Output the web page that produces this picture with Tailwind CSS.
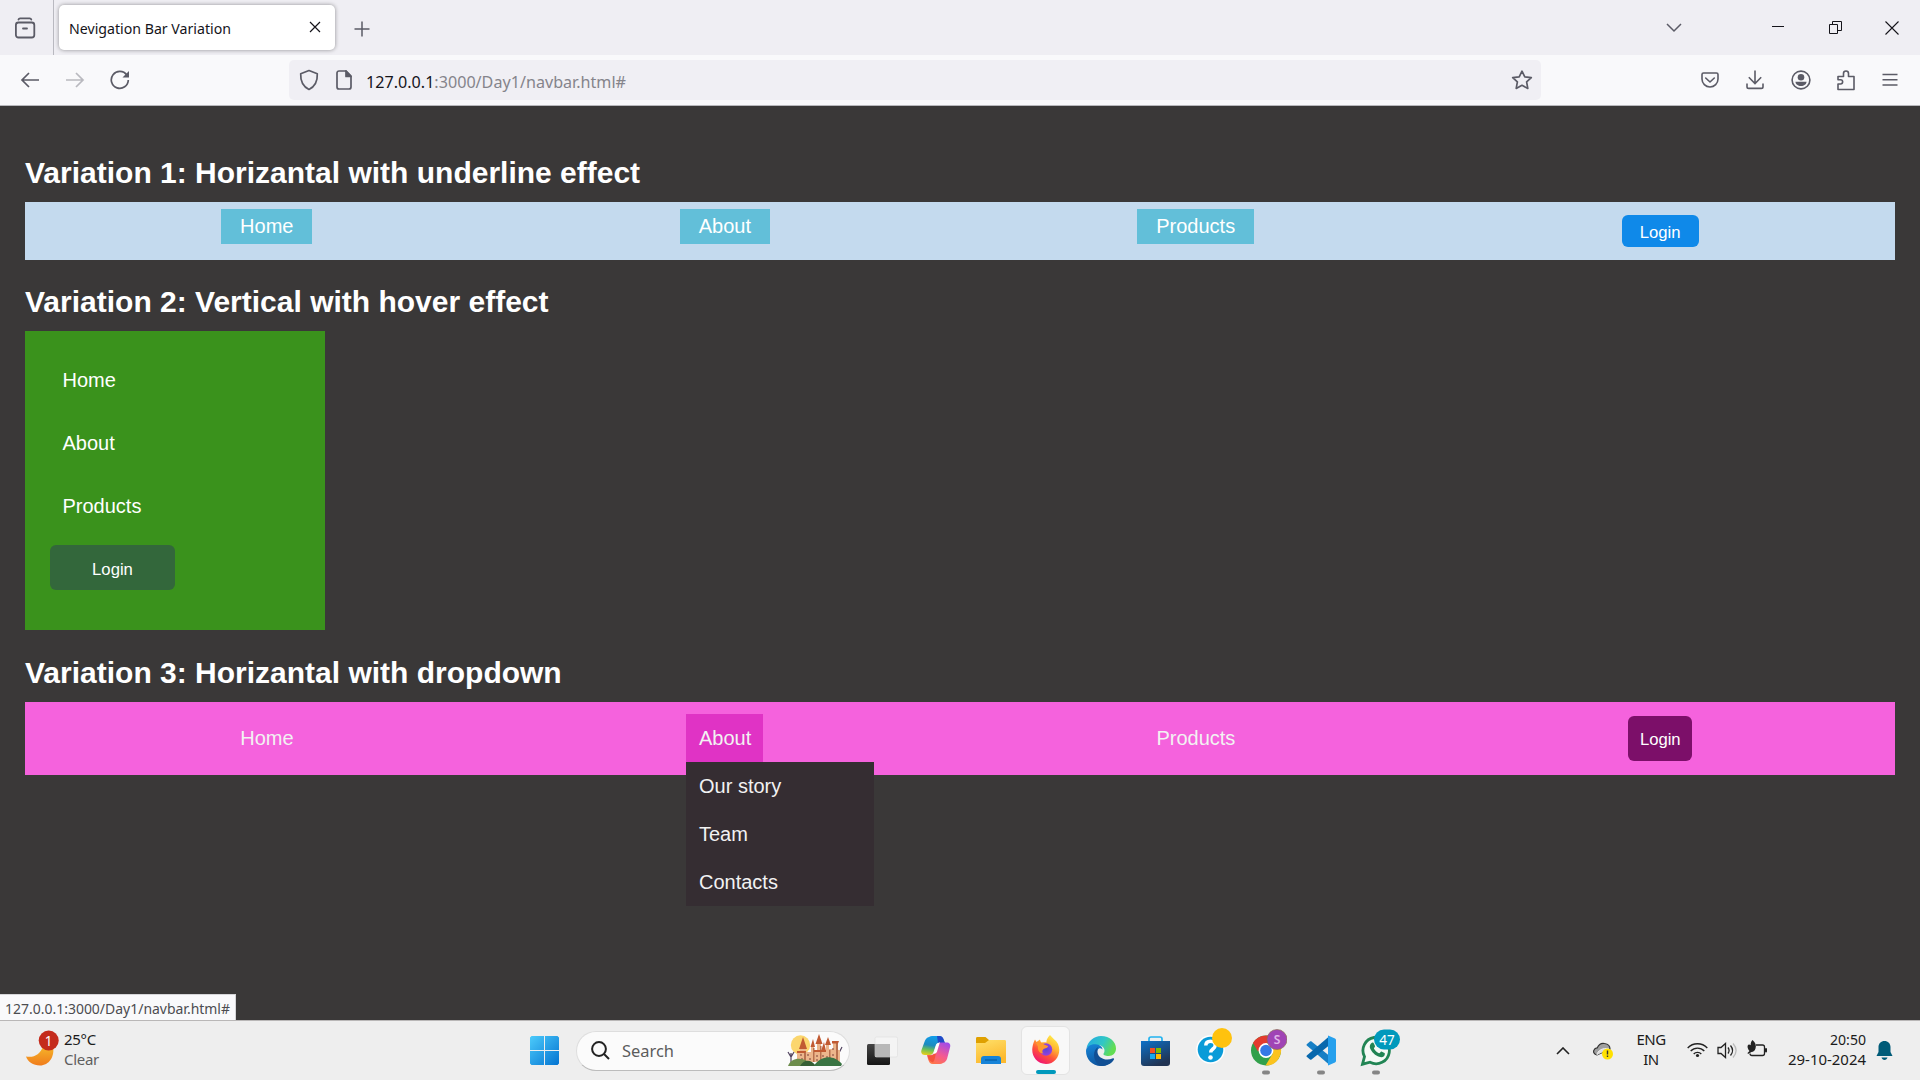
<!DOCTYPE html>
<html lang="en">
<head>
<meta charset="utf-8">
<title>Nevigation Bar Variation</title>
<script src="https://cdn.jsdelivr.net/npm/@tailwindcss/browser@4"></script>
</head>
<body class="w-[1920px] h-[1080px] overflow-hidden flex flex-col bg-[#3a3838] font-['Noto_Sans',sans-serif]">

<!-- Tab strip -->
<header class="h-[55px] shrink-0 bg-[#efeef3] flex items-center text-[#5b5b66]">
  <div class="w-[54px] h-full border-r border-[#b9b9c0] flex items-center pl-[14px]">
    <svg class="w-[22px] h-[22px]" viewBox="0 0 22 22" fill="none" stroke="currentColor" stroke-width="1.8" stroke-linecap="round"><path d="M4.5 2.6c.3-1 .8-1.3 1.6-1.3h9.600c.8 0 1.300.3 1.600 1.300"/><rect x="1.900" y="5.500" width="18.400" height="15" rx="2.500"/><path d="M9 11.500h4"/></svg>
  </div>
  <div class="ml-[5px] w-[276px] h-[45px] rounded-[5px] bg-white shadow-[0_0_4px_rgba(0,0,0,0.4)] flex items-center justify-between pl-[10px] pr-[14px] text-[#15141a]">
    <svg class="w-[180px] h-[30px] overflow-visible" viewBox="0 0 180 30"><text x="0" y="20.500" font-size="15" textLength="162" lengthAdjust="spacingAndGlyphs" fill="#15141a">Nevigation Bar Variation</text></svg>
    <svg class="w-[12px] h-[12px] -mt-[1px]" viewBox="0 0 12 12" stroke="currentColor" stroke-width="1.200"><path d="M1 1l10 10M11 1L1 11"/></svg>
  </div>
  <svg class="ml-[19px] mt-[3px] w-[16px] h-[16px]" viewBox="0 0 16 16" stroke="currentColor" stroke-width="1.500"><path d="M8 .5v15M.5 8h15"/></svg>
  <div class="flex-1"></div>
  <svg class="w-[16px] h-[10px] mr-[90px]" viewBox="0 0 16 10" fill="none" stroke="currentColor" stroke-width="1.500"><path d="M1 1l7 7 7-7"/></svg>
  <svg class="w-[12px] h-[12px] mr-[45px]" viewBox="0 0 12 12" stroke="#15141a" stroke-width="1"><path d="M0 4.500h12"/></svg>
  <svg class="w-[13px] h-[13px] mr-[43px]" viewBox="0 0 13 13" fill="none" stroke="#15141a" stroke-width="1"><path d="M.5 3.500h8v9h-8zM3.500 3.500v-3h9v9h-4"/></svg>
  <svg class="w-[14px] h-[14px] mr-[21px]" viewBox="0 0 14 14" stroke="#15141a" stroke-width="1.100"><path d="M.5.5l13 13M13.500.5l-13 13"/></svg>
</header>

<!-- Address toolbar -->
<div class="h-[51px] shrink-0 bg-[#f9f9fb] border-b border-[#b8b8bc] flex items-center text-[#5b5b66]">
  <svg class="ml-[20px] w-[20px] h-[16px]" viewBox="0 0 20 16" fill="none" stroke="currentColor" stroke-width="1.700"><path d="M19 8H2M9 1L2 8l7 7"/></svg>
  <svg class="ml-[25px] w-[20px] h-[16px] opacity-40" viewBox="0 0 20 16" fill="none" stroke="currentColor" stroke-width="1.700"><path d="M1 8h17M11 1l7 7-7 7"/></svg>
  <svg class="ml-[25px] w-[20px] h-[20px]" viewBox="0 0 20 20" fill="none" stroke="currentColor" stroke-width="1.700"><path d="M16.800 5A8.500 8.500 0 1 0 18.300 10"/><path d="M19 1v6.500h-6.500z" fill="currentColor" stroke="none"/></svg>
  <div class="ml-[159px] w-[1252px] h-[40px] rounded-[5px] bg-[#f0eff4] flex items-center pl-[10px] pr-[8px]">
    <svg class="w-[20px] h-[22px]" viewBox="0 0 20 22" fill="none" stroke="currentColor" stroke-width="1.700" stroke-linejoin="round"><path d="M10 1.500l8.300 3.300c.3 6.500-1.800 12.500-8.300 15.700C3.500 17.300 1.400 11.300 1.700 4.800z"/></svg>
    <svg class="ml-[17px] w-[16px] h-[20px]" viewBox="0 0 16 20" fill="none" stroke="currentColor" stroke-width="1.700" stroke-linejoin="round"><path d="M3 1h7l5 5v11a2 2 0 0 1-2 2H3a2 2 0 0 1-2-2V3a2 2 0 0 1 2-2z"/><path d="M10 1v5.500h5z" fill="currentColor"/></svg>
    <svg class="ml-[14px] w-[290px] h-[34px] overflow-visible" viewBox="0 0 290 34"><text x="0" y="25" font-size="17" textLength="260" lengthAdjust="spacingAndGlyphs" fill="#85848b"><tspan fill="#15141a">127.0.0.1</tspan>:3000/Day1/navbar.html#</text></svg>
    <div class="flex-1"></div>
    <svg class="w-[22px] h-[20px]" viewBox="0 0 22 20" fill="none" stroke="currentColor" stroke-width="1.700" stroke-linejoin="round"><path d="M11 1.200l2.800 5.600 6.500.8-4.700 4.300 1.200 6.500L11 15.300l-5.800 3.100 1.200-6.500L1.700 7.600l6.500-.8z"/></svg>
  </div>
  <div class="flex-1"></div>
  <svg class="w-[18px] h-[16px] mr-[27px]" viewBox="0 0 18 16" fill="none" stroke="currentColor" stroke-width="1.600" stroke-linecap="round" stroke-linejoin="round"><path d="M2.500 1h13c1 0 1.500.5 1.500 1.500V7a8 8 0 0 1-16 0V2.500C1 1.500 1.500 1 2.500 1zM4.700 6L9 10l4.300-4"/></svg>
  <svg class="w-[18px] h-[20px] mr-[27px]" viewBox="0 0 18 20" fill="none" stroke="currentColor" stroke-width="1.600"><path d="M9 .5V13M2.800 7.300L9 13.500l6.200-6.200M1 13.500v3.200c0 1 .8 1.700 1.700 1.700h12.600c1 0 1.700-.7 1.700-1.700v-3.200"/></svg>
  <svg class="w-[20px] h-[20px] mr-[26px]" viewBox="0 0 20 20"><circle cx="10" cy="10" r="8.900" fill="none" stroke="currentColor" stroke-width="1.600"/><circle cx="10" cy="7.300" r="3.300" fill="currentColor"/><path d="M4.500 11.800h11c0 2.500-2.500 4.200-5.500 4.200s-5.500-1.700-5.500-4.200z" fill="currentColor"/></svg>
  <svg class="w-[18px] h-[21px] mr-[27px]" viewBox="0 0 18 21" fill="none" stroke="currentColor" stroke-width="1.600" stroke-linejoin="round"><path d="M1 6.500h5.500V3.500a2.500 2.500 0 0 1 5 0v3H17v13H1v-5.500h2.500a2 2 0 0 0 0-4.300H1z"/></svg>
  <svg class="w-[16px] h-[14px] mr-[22px]" viewBox="0 0 16 14" stroke="currentColor" stroke-width="1.500"><path d="M.5 1.500h15M.5 6.800h15M.5 12.100h15"/></svg>
</div>

<!-- Page -->
<main class="relative flex-1 px-[25px] pt-[50px] font-['Liberation_Sans',Arial,sans-serif] text-white text-[20px]">
  <h2 class="text-[30px] leading-[34px] font-bold mb-[12px]">Variation 1: Horizantal with underline effect</h2>
  <nav class="h-[58px] bg-[#c4daee] px-[12.5px] flex justify-around items-start">
    <a class="mt-[7px] h-[35px] leading-[34px] px-[18.75px] bg-[#62bfd9]">Home</a>
    <a class="mt-[7px] h-[35px] leading-[34px] px-[18.75px] bg-[#62bfd9]">About</a>
    <a class="mt-[7px] h-[35px] leading-[34px] px-[18.75px] bg-[#62bfd9]">Products</a>
    <button class="mt-[13px] h-[32px] w-[77px] rounded-[6px] bg-[#0f89e9] text-[16.670px] pt-[2px]">Login</button>
  </nav>

  <h2 class="text-[30px] leading-[34px] font-bold mt-[25px] mb-[12px]">Variation 2: Vertical with hover effect</h2>
  <nav class="w-[300px] h-[299px] bg-[#3a921c] px-[25px] pt-[25px] flex flex-col items-start">
    <a class="h-[48px] leading-[48px] px-[12.5px] mb-[15px]">Home</a>
    <a class="h-[48px] leading-[48px] px-[12.5px] mb-[15px]">About</a>
    <a class="h-[48px] leading-[48px] px-[12.5px] mb-[15px]">Products</a>
    <button class="w-[125px] h-[45px] rounded-[6px] bg-[#33673b] text-[16.670px] pt-[3px]">Login</button>
  </nav>

  <h2 class="text-[30px] leading-[34px] font-bold mt-[26px] mb-[12px]">Variation 3: Horizantal with dropdown</h2>
  <nav class="h-[73px] bg-[#f562dd] px-[12.5px] flex justify-around items-start text-[#f2f2f2]">
    <a class="mt-[12px] h-[48px] leading-[48px] px-[12.5px]">Home</a>
    <div class="relative mt-[12px]">
      <a class="block w-[77px] h-[48px] leading-[48px] pl-[12.5px] bg-[#e033c5]">About</a>
      <div class="absolute left-0 top-[48px] w-[188px] h-[144px] bg-[#352d32] flex flex-col leading-[48px] px-[12.5px]">
        <a>Our story</a><a>Team</a><a>Contacts</a>
      </div>
    </div>
    <a class="mt-[12px] h-[48px] leading-[48px] px-[12.5px]">Products</a>
    <button class="mt-[14px] w-[64px] h-[45px] rounded-[6px] bg-[#7c0f69] text-white text-[16.670px] pt-[2px]">Login</button>
  </nav>

  <div class="absolute left-0 bottom-0 w-[236px] h-[26px] bg-[#f9f9fb] border-t border-r border-[#d5d5d8]">
    <svg class="w-[235px] h-[25px] overflow-visible" viewBox="0 0 235 25"><text x="5" y="18.500" font-size="15" textLength="225" lengthAdjust="spacingAndGlyphs" fill="#4c4c50" font-family="Noto Sans, sans-serif">127.0.0.1:3000/Day1/navbar.html#</text></svg>
  </div>
</main>

<!-- Taskbar -->
<footer class="h-[60px] shrink-0 bg-[#eeeeee] border-t border-[#b9b7b7] flex items-center text-[#1b1b1b] text-[15px] leading-[20px]">
  <div class="w-[529px] flex items-center pl-[25px]">
    <svg class="w-[36px] h-[40px] -mt-[8px]" viewBox="0 0 36 40"><defs><linearGradient id="moon" x2="0" y2="1"><stop stop-color="#f5b52a"/><stop offset="1" stop-color="#f07c1c"/></linearGradient></defs><path d="M1 29.500c8 1.500 14-2 17-10h10c2 10-4 19-13 19C8 38.500 3 35 1 29.500z" fill="url(#moon)"/><circle cx="23.700" cy="13.500" r="10" fill="#c42b1c"/><text x="23.700" y="18.500" font-size="13.500" fill="#fff" text-anchor="middle">1</text></svg>
    <div class="ml-[3px] tracking-[-0.300px] -mt-[4px]"><p>25°C</p><p class="text-[#5e5e5e]">Clear</p></div>
  </div>

  <div class="flex items-center">
    <svg class="ml-[1px] w-[29px] h-[29px]" viewBox="0 0 29 29"><defs><linearGradient id="win" x1="0" y1="0" x2="1" y2="1" ><stop stop-color="#4ccbfb"/><stop offset="1" stop-color="#0474d1"/></linearGradient></defs><path fill="url(#win)" d="M1.500 0H14v14H0V1.500zM15 0h12.500L29 1.500V14H15zM0 15h14v14H1.500L0 27.500zM15 15h14v12.500L27.500 29H15z"/></svg>
    <div class="ml-[17px] w-[274px] h-[40px] rounded-full bg-[#fbfbfb] border border-[#dedede] border-b-[#bcbcbc] flex items-center pl-[14px] pr-[6px]">
      <svg class="w-[19px] h-[19px]" viewBox="0 0 19 19" fill="none" stroke="#222" stroke-width="2"><circle cx="8" cy="8" r="6.900"/><path d="M13 13l5 5"/></svg>
      <svg class="ml-[12px] w-[70px] h-[28px] overflow-visible" viewBox="0 0 70 28"><text x="0" y="20" font-size="17" textLength="52" lengthAdjust="spacingAndGlyphs" fill="#5c5c5c">Search</text></svg>
      <div class="flex-1"></div>
      <svg class="w-[56px] h-[33px]" viewBox="0 0 56 33"><circle cx="13.500" cy="11" r="9.700" fill="#fbd66e"/><path d="M4 31V19m-3-1l3 5 3-5M52 29V17m-3-4l3 6 3-6" stroke="#51435f" fill="none" stroke-width="1.200"/><path d="M10 28V18h3v-3h6v3h5v-6h3v5h3V10h4v7h5v-7h3v5h4V8h5v8h2v12z" fill="#ecb68c"/><path d="M17 28V17h2v11zM26 28V14h1.500v14zM33 28V12h1.500v16zM42 28V16h1.500v12zM49 28V9h2v19z" fill="#b8714f"/><path d="M16 3l4 12h-8zM32 0l3.500 10h-7zM26 5l2 8h-4.500zM41 3l3 8h-6zM37 8l2 9h-5zM45 7h7l-1 2.500h-6zM10 17h9l-1 2h-8zM27 16h12v2H27z" fill="#c15a32"/><path d="M14 20v2m7-2v2m-6 2v2m8-2v2m7-5v2m6-2v2m4-1v2m6-10v2m0 4v2m-16 3v2m12-2v2" stroke="#874c42" stroke-width="1.100"/><path d="M1 32c3-8 12-9 19-5 4 2 7 4 9 5z" fill="#6d8d4c"/><path d="M13 32c4-7 11-7 16 0z" fill="#355f35"/><path d="M27 32c5-9 18-13 28-2l-1 2z" fill="#3a7443"/></svg>
    </div>

    <svg class="ml-[17px] w-[31px] h-[29px]" viewBox="0 0 31 29"><defs><linearGradient id="tv" x2="0" y2="1"><stop stop-color="#454545"/><stop offset="1" stop-color="#161616"/></linearGradient></defs><rect y="8" width="23" height="21" rx="1.500" fill="url(#tv)"/><rect x="8" y="1" width="22.500" height="20" rx="1.500" fill="#f4f4f4" stroke="#ddd" stroke-width=".6"/><path d="M8 8h15v13H9.500L8 19.500z" fill="#b8b8b8"/></svg>

    <svg class="ml-[23px] -mt-[1px] w-[30px] h-[28px]" viewBox="0 0 30 28"><defs><linearGradient id="cpa" x1=".3" y1="0" x2=".1" y2="1"><stop stop-color="#129ce8"/><stop offset=".45" stop-color="#1c8bbf"/><stop offset=".7" stop-color="#6dc055"/><stop offset="1" stop-color="#f3cf15"/></linearGradient><linearGradient id="cpb" x1=".8" y1="0" x2=".3" y2="1"><stop stop-color="#a04bea"/><stop offset=".55" stop-color="#f45a92"/><stop offset="1" stop-color="#ff7548"/></linearGradient></defs><path d="M8 1c1-.7 2-1 3-1h7c3 0 4 2 5 5l.7 2H18c-2 0-3 1-3.500 3l-2 6c-.7 2-2 3-4 3H4c-3 0-4.500-2-3.500-5L4 4.500C5 2.500 6 1.500 8 1z" fill="url(#cpa)"/><path d="M16 0h2.500c2.500 0 4 2 4.500 4.500l1 2.500h-7z" fill="#2149c7"/><path d="M22 27c-1 .7-2 1-3 1h-7c-3 0-4-2-5-5l-1-4h4c2 0 3-1 3.500-3l3-8c.6-1 2-1.500 4-1.500h5c3 0 4.500 2 3.500 5L26 23c-1 2-2 3.500-4 4z" fill="url(#cpb)"/><path d="M6.500 19.500H10c2 0 3-1 3.700-3l2-6.500c.5-1.500 1.300-2.500 3-2.800L15 17.500c-1 2.500-.7 6-3 9-2.500-.5-4-2.500-4.700-4.500z" fill="#f4543b"/><path d="M13.500 17l2.500-8c.3-.8.8-1.300 1.800-1.600l-2.500 8.100c-.4 1-.9 1.500-1.800 1.500z" fill="#fff" stroke="#fff" stroke-width="1.500"/></svg>

    <svg class="ml-[25px] w-[30px] h-[27px]" viewBox="0 0 30 27"><defs><linearGradient id="fold" x2=".4" y2="1"><stop stop-color="#ffe06a"/><stop offset="1" stop-color="#fcb92e"/></linearGradient></defs><path d="M0 1.500C0 .5.500 0 1.500 0h8l4 3.500L11 6H0z" fill="#dfa000"/><path d="M0 6h9l4-3h15.500c1 0 1.500.5 1.500 1.500V26H0z" fill="url(#fold)"/><path d="M5 27v-5c0-2 1-3 3-3h14c2 0 3 1 3 3v5z" fill="#1683d8"/><path d="M9 23h12" stroke="#075fa7" stroke-width="1.300"/></svg>

    <div class="relative ml-[15px] w-[49px] h-[49px] rounded-[6px] bg-[#f8f8f8] border border-[#e3e3e3] flex items-center justify-center">
      <svg class="w-[28px] h-[29px] -mt-[2px]" viewBox="0 0 28 29"><defs><linearGradient id="ff" x1=".85" y1=".05" x2=".3" y2="1"><stop stop-color="#fff04c"/><stop offset=".35" stop-color="#ffb531"/><stop offset=".65" stop-color="#ff5438"/><stop offset="1" stop-color="#ef1275"/></linearGradient><radialGradient id="ffc"><stop stop-color="#5a45d7"/><stop offset="1" stop-color="#9541dd"/></radialGradient></defs><path d="M18 0c2 3 6 5 8 9 4 9-2 20-12 20S-1 20 .5 12C1 9 2 6 3 4.500c.5 1 1 1.800 1.500 2.500L8 4.500c.2 1.500.7 2.300 1.500 3 2-.5 4-.5 5 0C14 5 16 2 18 0z" fill="url(#ff)"/><circle cx="14" cy="14.500" r="6.200" fill="url(#ffc)"/><path d="M4 8c3-1 6-.5 8 1.500l4 1.500c0 2-3 2.500-4.500 3-1 1-2 3 0 4.500-4 0-6-3-5.500-7z" fill="#ff982e"/></svg>
      <span class="absolute left-[14px] bottom-0 w-[20px] h-[4px] rounded-full bg-[#0099bc]"></span>
    </div>

    <svg class="ml-[16px] w-[30px] h-[30px]" viewBox="0 0 30 30"><defs><linearGradient id="ea" x2="1" y2=".4"><stop stop-color="#23a7e5"/><stop offset=".6" stop-color="#31c7c5"/><stop offset="1" stop-color="#62dd52"/></linearGradient><linearGradient id="eb" x2=".3" y2="1"><stop stop-color="#1686d9"/><stop offset="1" stop-color="#0e559f"/></linearGradient></defs><path d="M.5 12C2 5 8 0 15 0c9 0 15 6 15 12.500 0 4.500-3 7.500-7.500 7.500-3.500 0-5.500-1.200-5-2.200 2.500-3.300.5-8.800-6-8.800C6 9 2 10.500.5 12z" fill="url(#ea)"/><path d="M0 15c0-5 6-7.500 11-6.500 4 .8 5.500 3 5.500 5-3-3-6 0-5.500 4.500.7 6 7 9 14.500 6.500l2-.5C25 28 20 30 15 30 6 30 0 23 0 15z" fill="url(#eb)"/><path d="M12 11c-5 3-6 12 1 18.500C18 31 25 28 28 23.500c.3-1-.4-1.500-1-1.200-7 3.200-15 0-15.500-6-.2-2.200 0-4 .5-5.300z" fill="#114f94"/></svg>

    <svg class="ml-[25px] w-[29px] h-[30px]" viewBox="0 0 29 30"><defs><linearGradient id="st" x2=".5" y2="1"><stop stop-color="#0d71c8"/><stop offset="1" stop-color="#213453"/></linearGradient></defs><path d="M8 7V3c0-1.200.8-2 2-2h9c1.200 0 2 .8 2 2v4" fill="none" stroke="#22b3f0" stroke-width="1.700"/><path d="M0 5h29v22c0 2-1 3-3 3H3c-2 0-3-1-3-3z" fill="url(#st)"/><path d="M9 12h5v5H9z" fill="#f25022"/><path d="M15 12h5v5h-5z" fill="#7fba00"/><path d="M9 18h5v5H9z" fill="#17a9ee"/><path d="M15 18h5v5h-5z" fill="#ffb900"/></svg>

    <svg class="ml-[26px] -mt-[8px] w-[37px] h-[37px]" viewBox="0 0 37 37"><circle cx="14.500" cy="21.500" r="14.300" fill="#fff"/><circle cx="14.500" cy="21.500" r="12.800" fill="#0a9bd8"/><path d="M9.800 17.500c0-3 2-4.300 4.700-4.300 2.800 0 4.700 1.600 4.700 4 0 4-4.500 3.600-4.500 7.300" fill="none" stroke="#fff" stroke-width="3.500"/><circle cx="14.500" cy="29.500" r="2.300" fill="#fff"/><circle cx="26" cy="10" r="10" fill="#ffc20e"/></svg>

    <div class="ml-[17px] w-[37px] h-[60px]">
      <svg class="w-[37px] h-[60px]" viewBox="0 0 37 60"><circle cx="16" cy="29.500" r="15" fill="#31a04b"/><path d="M16 14.500a15 15 0 0 1 13 7.500H16L8 30.500 3 22A15 15 0 0 1 16 14.500z" fill="#e33b2e"/><path d="M29 22A15 15 0 0 1 15.500 44.500L22.500 33V22z" fill="#fcc31e"/><circle cx="16" cy="29.500" r="7.400" fill="#fff"/><circle cx="16" cy="29.500" r="5.800" fill="#3578e5"/><circle cx="27" cy="18.500" r="10" fill="#a044b5" stroke="#8c6b55" stroke-width=".7"/><text x="27" y="23" text-anchor="middle" font-size="12" font-weight="600" fill="#e1b7ea">S</text><rect x="12" y="49.500" width="8" height="4" rx="2" fill="#858585"/></svg>
    </div>

    <div class="ml-[19px] w-[31px] h-[60px]">
      <svg class="w-[31px] h-[60px]" viewBox="0 0 31 60"><path d="M1 23l3-2.500c.5-.4 1-.3 1.500 0L23 34.500v9L.8 24.500c-.5-.5-.4-1 .2-1.500z" fill="#167fc5"/><path d="M1 36l3 2.500c.5.400 1 .3 1.500 0L23 24.500v-9L.8 34.500c-.5.500-.4 1 .2 1.500z" fill="#0868ad"/><path d="M22 14.500l7 3c.7.400 1 .8 1 1.500v21c0 .7-.3 1.100-1 1.500l-7 3z" fill="#26a0ed"/><rect x="11" y="49.500" width="8" height="4" rx="2" fill="#858585"/></svg>
    </div>

    <div class="ml-[23px] w-[40px] h-[60px]">
      <svg class="w-[40px] h-[60px]" viewBox="0 0 40 60"><path d="M2.500 43.200l2-7.500A13.200 13.200 0 1 1 10 41.200z" fill="#f5faf6" stroke="#218554" stroke-width="2.800"/><path d="M11 22.500c1.500-1.500 2.500-1 3 .2l1 2.400c.3.800-1.400 2-1 2.600 1.300 2.300 3 3.800 5 4.600.8.300 1.700-2 2.500-1.700l3 1.500c.8.400.2 2.600-.9 3.500-1.500 1.200-4.200.8-7.200-1-3.700-2.400-6.400-6.400-6.600-8.600 0-1.300.4-2.700 1.200-3.500z" fill="#218554"/><rect x="14" y="8.500" width="26" height="20" rx="10" fill="#0099bc"/><text x="27" y="23.500" text-anchor="middle" font-size="13.500" fill="#fff">47</text><rect x="12" y="49.500" width="8" height="4" rx="2" fill="#858585"/></svg>
    </div>
  </div>

  <div class="flex-1"></div>
  <!-- System tray -->
  <svg class="w-[14px] h-[8px]" viewBox="0 0 14 8" fill="none" stroke="#222" stroke-width="1.600"><path d="M1 7l6-6 6 6"/></svg>
  <svg class="ml-[23px] w-[20px] h-[18px]" viewBox="0 0 20 18"><path d="M4 13C1 12.500 0 10 1 8c.6-1.500 2-2.300 3.300-2.200C6 2 9 1 11.500 1.500 15 2 17 4 17 7z" fill="#a0a0a0" stroke="#333" stroke-width="1.200"/><path d="M4 13c0-4 6-8 12-6" fill="#ddd" stroke="#eee"/><circle cx="14.500" cy="12" r="5.500" fill="#ffe100"/><path d="M14.500 8.500v4M14.500 13.500v1.500" stroke="#333" stroke-width="1.400"/></svg>
  <div class="ml-[22px] -mt-[3px] w-[32px] text-center tracking-[-0.500px]"><p>ENG</p><p>IN</p></div>
  <svg class="ml-[20px] -mt-[1px] w-[21px] h-[16px]" viewBox="0 0 21 16" fill="none" stroke="#222" stroke-width="1.400"><path d="M.7 6a13.500 13.500 0 0 1 19.600 0M3.700 9a9.400 9.400 0 0 1 13.600 0M6.700 12a5.200 5.200 0 0 1 7.600 0"/><circle cx="10.500" cy="13.500" r="1.600" fill="#222" stroke="none"/></svg>
  <svg class="ml-[9px] w-[20px] h-[17px]" viewBox="0 0 20 17" fill="none" stroke="#222" stroke-width="1.300"><path d="M1 5.500h3L8.500 1.500v14L4 11.500H1zM11 5.500c1.300 1.800 1.300 4.200 0 6M13.500 3.500c2.500 3 2.500 7 0 10"/><path d="M16 1.500c4 4.500 4 9.500 0 14" stroke="#bbb"/></svg>
  <svg class="ml-[10px] -mt-[4px] w-[20px] h-[17px]" viewBox="0 0 20 17"><path d="M9 5h6.500c1.500 0 2 .7 2 2v6.500c0 1.500-.7 2-2 2H5c-1.500 0-2-.7-2-2" fill="none" stroke="#222" stroke-width="1.300"/><rect x="18" y="8" width="2" height="4.500" rx="1" fill="#222"/><path d="M5.500 0c3 2.500 4 5.500 3 8.500-.6 2-2 3.500-4 3.500L1 14l-.5-1 2-2C0 8 0 5 2 4.500c.7 0 1.200.3 1.700.8C3.500 3 4.300 1 5.500 0z" fill="#222"/></svg>
  <svg class="ml-[19px] -mt-[2px] w-[80px] h-[44px] overflow-visible" viewBox="0 0 80 44" font-size="15" fill="#1b1b1b"><text x="44" y="17" textLength="36" lengthAdjust="spacingAndGlyphs">20:50</text><text x="2" y="37" textLength="78" lengthAdjust="spacingAndGlyphs">29-10-2024</text></svg>
  <svg class="ml-[10px] mr-[27px] w-[17px] h-[19px]" viewBox="0 0 17 19"><path d="M8.500 0C12 0 14.500 2.600 14.500 6v5l2 4H.5l2-4V6C2.500 2.600 5 0 8.500 0zM5.500 16.500h6c-.5 1.600-1.500 2.500-3 2.500s-2.500-.9-3-2.500z" fill="#005b78"/></svg>
</footer>
</body>
</html>
